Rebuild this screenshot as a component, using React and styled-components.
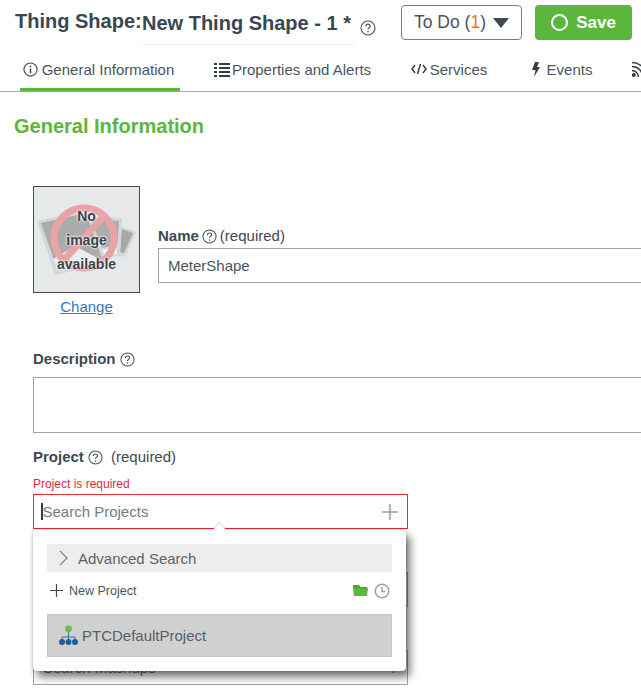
import React from 'react';
import styled, { createGlobalStyle } from 'styled-components';

const GlobalStyle = createGlobalStyle`
  html, body {
    margin: 0;
    padding: 0;
    height: 100%;
    overflow: hidden;
    background: #ffffff;
  }
  body {
    font-family: "Liberation Sans", Arial, sans-serif;
    color: #333d47;
  }
`;

const Page = styled.div`
  width: 641px;
  height: 689px;
  overflow: hidden;
`;

const Header = styled.div`
  height: 50px;
  display: flex;
  align-items: flex-start;
  padding: 4px 0 0 15px;
  box-sizing: border-box;
  white-space: nowrap;
`;

const TitleLabel = styled.div`
  font-size: 20px;
  font-weight: bold;
  line-height: 35px;
  color: #3b4650;
  width: 127px;
`;

const TitleName = styled.div`
  font-size: 20px;
  font-weight: bold;
  line-height: 35px;
  height: 41px;
  color: #3b4650;
  width: 213px;
  padding-top: 2px;
  box-sizing: border-box;
  border-bottom: 1px solid #eeeeee;
`;

const TitleHelp = styled.span`
  display: flex;
  margin: 16px 0 0 5px;
`;

const TodoButton = styled.div`
  width: 119px;
  height: 33px;
  margin-left: 25px;
  margin-top: 1px;
  border: 1px solid #777f85;
  border-radius: 4px;
  font-size: 17.5px;
  display: flex;
  justify-content: center;
  align-items: center;
  gap: 7px;
  color: #4a545c;
`;

const Count = styled.span`
  color: #e8790c;
`;

const SaveButton = styled.div`
  width: 97px;
  height: 35px;
  margin-left: 13px;
  margin-top: 1px;
  border-radius: 4px;
  background: #5bb73b;
  color: #ffffff;
  font-size: 17px;
  font-weight: bold;
  display: flex;
  align-items: center;
  justify-content: center;
  gap: 8px;
  flex: none;
`;

const SaveRing = styled.span`
  width: 13px;
  height: 13px;
  border: 2.5px solid #ffffff;
  border-radius: 50%;
`;

const Tabs = styled.div`
  height: 42px;
  box-sizing: border-box;
  border-bottom: 1px solid #a8a8a8;
  display: flex;
  padding-left: 20px;
  white-space: nowrap;
  overflow: hidden;
`;

const Tab = styled.div`
  display: flex;
  align-items: center;
  justify-content: center;
  gap: ${p => p.$gap || 3}px;
  height: 41px;
  width: ${p => p.$width}px;
  margin-left: ${p => p.$space || 0}px;
  padding-right: ${p => p.$pad || 0}px;
  box-sizing: border-box;
  font-size: 15px;
  color: #4b555d;
  flex: none;
  border-bottom: 3px solid ${p => (p.$active ? '#5bb73b' : 'transparent')};
`;

const Content = styled.div`
  padding: 22px 0 0 14px;
`;

const SectionTitle = styled.h2`
  margin: 0;
  font-size: 20px;
  line-height: 24px;
  font-weight: bold;
  color: #5bb73b;
`;

const Form = styled.div`
  padding: 48px 0 0 19px;
  width: 700px;
`;

const NameRow = styled.div`
  display: flex;
  gap: 18px;
`;

const ImageColumn = styled.div`
  width: 107px;
  display: flex;
  flex-direction: column;
  align-items: center;
`;

const ImageBox = styled.div`
  position: relative;
  width: 107px;
  height: 107px;
  box-sizing: border-box;
  border: 1px solid #414c52;
  background: #e6e8ea;
`;

const ImageArt = styled.svg`
  display: block;
`;

const ImageText = styled.div`
  position: absolute;
  left: 0;
  right: 0;
  top: 17px;
  text-align: center;
  font-size: 14px;
  font-weight: bold;
  line-height: 24px;
  color: #3a444c;
  text-shadow: 0 0 3px #ffffff, 0 0 2px #ffffff;
`;

const ChangeLink = styled.a`
  margin-top: 5px;
  font-size: 15px;
  line-height: 18px;
  color: #2f7ab8;
  text-decoration: underline;
`;

const NameColumn = styled.div`
  flex: 1;
  padding-top: 41px;
`;

const Label = styled.div`
  display: flex;
  align-items: center;
  gap: ${p => p.$gap || 3}px;
  font-size: 15px;
  line-height: 18px;
  color: #3f4950;
`;

const LabelName = styled.b`
  font-weight: bold;
`;

const TextBox = styled.div`
  margin-top: ${p => p.$top || 3}px;
  width: ${p => p.$width || 640}px;
  height: ${p => p.$height || 35}px;
  box-sizing: border-box;
  border: 1px solid ${p => p.$border || '#a3a3a3'};
  padding: 0 9px;
  display: flex;
  align-items: center;
  justify-content: space-between;
  font-size: 15px;
  color: ${p => p.$color || '#4b555d'};
`;

const Field = styled.div`
  margin-top: ${p => p.$top}px;
`;

const ErrorText = styled.div`
  margin-top: 11px;
  font-size: 12px;
  line-height: 14px;
  color: #e8273a;
`;

const Caret = styled.span`
  width: 1.5px;
  height: 17px;
  background: #333d47;
  margin-left: -2px;
`;

const SearchText = styled.span`
  flex: 1;
`;

const ProjectArea = styled.div`
  position: relative;
  width: 375px;
`;

const Popup = styled.div`
  position: absolute;
  left: 0;
  top: 36px;
  width: 373px;
  height: 141px;
  box-sizing: border-box;
  background: #ffffff;
  border-radius: 4px;
  padding: 14px 14px 0;
  box-shadow: 4px 6px 8px rgba(0, 0, 0, 0.55), 0 0 3px rgba(0, 0, 0, 0.25);
`;

const PopupArrow = styled.span`
  position: absolute;
  top: -5px;
  left: 182px;
  width: 9px;
  height: 9px;
  background: #ffffff;
  transform: rotate(45deg);
  box-shadow: -1px -1px 1px rgba(0, 0, 0, 0.12);
`;

const AdvancedRow = styled.div`
  position: relative;
  height: 28px;
  background: #ededed;
  display: flex;
  align-items: center;
  gap: 10px;
  padding-left: 12px;
  font-size: 15px;
  color: #5a6369;
`;

const ActionRow = styled.div`
  height: 42px;
  display: flex;
  align-items: center;
  padding: 0 2px 5px 3px;
  box-sizing: border-box;
  font-size: 12.5px;
  color: #4b555d;
`;

const NewLabel = styled.span`
  margin-left: 6px;
  flex: 1;
`;

const ActionIcons = styled.span`
  display: flex;
  align-items: center;
  gap: 6px;
`;

const ResultRow = styled.div`
  height: 43px;
  box-sizing: border-box;
  background: #d0d0d0;
  border: 1px solid #c6c6c6;
  display: flex;
  align-items: center;
  gap: 3px;
  padding-left: 11px;
  font-size: 15px;
  color: #565f65;
`;

const Help = ({ size = 15 }) => (
  <svg width={size} height={size} viewBox="0 0 16 16" fill="none">
    <circle cx="8" cy="8" r="7" stroke="#4a545c" strokeWidth="1.1" />
    <path d="M5.8 6.3c0-1.3 1-2.1 2.2-2.1s2.2.8 2.2 2c0 1.7-2.2 1.7-2.2 3.4" stroke="#4a545c" strokeWidth="1.2" />
    <circle cx="8" cy="11.6" r=".8" fill="#4a545c" />
  </svg>
);

const Plus = ({ size, color, width = 1.5 }) => (
  <svg width={size} height={size} viewBox="0 0 16 16">
    <path d="M8 0v16M0 8h16" stroke={color} strokeWidth={width} fill="none" />
  </svg>
);

const NoImageArt = () => (
  <ImageArt width="105" height="105" viewBox="0 0 105 105">
    <path d="M86 39l16 6-11 25-7-2z" fill="#d4d6d7" />
    <path d="M88 42l11 4-9 20-4-1z" fill="#a8a8a8" />
    <path d="M54 29l34 2-2 38-22 2z" fill="#d4d6d7" />
    <path d="M58 32l27 2-2 25-19 2z" fill="#adadad" />
    <path d="M64 63l19-2v6l-17 2z" fill="#f2f3f3" />
    <path d="M3 34l51-11 19 53-52 12z" fill="#d4d6d7" />
    <path d="M7 36l45-10 17 48-45 10z" fill="#ababab" />
    <path d="M19 72l22-13 28 15-45 10z" fill="#eceded" />
    <circle cx="50" cy="51" r="30" fill="none" stroke="#e9a3a7" strokeWidth="7" />
    <path d="M71 28L29 74" stroke="#e9a3a7" strokeWidth="7" />
  </ImageArt>
);

const App = () => (
  <Page>
    <GlobalStyle />
    <Header>
      <TitleLabel>Thing Shape:</TitleLabel>
      <TitleName>New Thing Shape - 1 *</TitleName>
      <TitleHelp><Help size={16} /></TitleHelp>
      <TodoButton>
        <span>To Do (<Count>1</Count>)</span>
        <svg width="16" height="10" viewBox="0 0 16 10"><path d="M0 0h16L8 10z" fill="#3f4950" /></svg>
      </TodoButton>
      <SaveButton><SaveRing />Save</SaveButton>
    </Header>
    <Tabs>
      <Tab $active $width={160} $pad={3} $gap={4}>
        <svg width="15" height="15" viewBox="0 0 16 16" fill="none">
          <circle cx="8" cy="8" r="7" stroke="#3f4950" strokeWidth="1.2" />
          <path d="M8 7v5M8 4v1.6" stroke="#3f4950" strokeWidth="1.6" />
        </svg>
        General Information
      </Tab>
      <Tab $width={159} $space={33} $gap={2}>
        <svg width="16" height="15" viewBox="0 0 16 15">
          <path d="M0 1h3v2H0zM5 1h11v2H5zM0 5h3v2H0zM5 5h11v2H5zM0 9h3v2H0zM5 9h11v2H5zM0 13h3v2H0zM5 13h11v2H5z" fill="#333d47" />
        </svg>
        Properties and Alerts
      </Tab>
      <Tab $width={80} $space={37}>
        <svg width="16" height="12" viewBox="0 0 16 12" fill="none">
          <path d="M4 2L1 6l3 4M12 2l3 4-3 4M9.500 1l-3 10" stroke="#333d47" strokeWidth="1.5" />
        </svg>
        Services
      </Tab>
      <Tab $width={66} $space={40} $gap={7}>
        <svg width="8" height="15" viewBox="0 0 8 15"><path d="M3 0h4L5 5h3L2 15l1.500-7H0z" fill="#333d47" /></svg>
        Events
      </Tab>
      <Tab $width={16} $space={37}>
        <svg width="16" height="16" viewBox="0 0 16 16" fill="none" style={{ flex: 'none' }}>
          <path d="M0 1.500c8 0 14.500 6.500 14.500 14.500M0 5.500c6 0 10.500 4.500 10.500 10.500M0 9.500c3.500 0 6.500 3 6.500 6.500" stroke="#333d47" strokeWidth="1.400" />
          <circle cx="1.800" cy="14" r="2" fill="#333d47" />
        </svg>
      </Tab>
    </Tabs>
    <Content>
      <SectionTitle>General Information</SectionTitle>
      <Form>
        <NameRow>
          <ImageColumn>
            <ImageBox>
              <NoImageArt />
              <ImageText>No<br />image<br />available</ImageText>
            </ImageBox>
            <ChangeLink>Change</ChangeLink>
          </ImageColumn>
          <NameColumn>
            <Label><LabelName>Name</LabelName><Help /><span>(required)</span></Label>
            <TextBox $width={500}>MeterShape</TextBox>
          </NameColumn>
        </NameRow>
        <Field $top={34}>
          <Label $gap={4}><LabelName>Description</LabelName><Help /></Label>
          <TextBox $top={9} $height={56} />
        </Field>
        <Field $top={15}>
          <Label $gap={4}><LabelName>Project</LabelName><Help /><span>&nbsp;(required)</span></Label>
          <ErrorText>Project is required</ErrorText>
          <ProjectArea>
            <TextBox $top={3} $width={375} $border="#e8273a" $color="#737c82">
              <Caret />
              <SearchText>Search Projects</SearchText>
              <Plus size={16} color="#9a9a9a" />
            </TextBox>
            <Popup>
              <PopupArrow />
              <AdvancedRow>
                <svg width="9" height="16" viewBox="0 0 9 16" fill="none"><path d="M1 1l7 7-7 7" stroke="#777f85" strokeWidth="1.1" /></svg>
                Advanced Search
              </AdvancedRow>
              <ActionRow>
                <Plus size={13} color="#3f4950" />
                <NewLabel>New Project</NewLabel>
                <ActionIcons>
                  <svg width="15" height="11" viewBox="0 0 15 11"><path d="M0 0h6l1.500 2H14v1H0z" fill="#4fa52f" /><path d="M0 3h15l-1 8H1z" fill="#5bb73b" /></svg>
                  <svg width="16" height="16" viewBox="0 0 16 16" fill="none">
                    <circle cx="8" cy="8" r="6.800" stroke="#a0a0a0" strokeWidth="1.500" />
                    <path d="M8 4v4.500h3.500" stroke="#a0a0a0" strokeWidth="1.500" />
                  </svg>
                </ActionIcons>
              </ActionRow>
              <ResultRow>
                <svg width="20" height="21" viewBox="0 0 20 21" fill="none">
                  <path d="M9.500 6v6M3 16v-4h13v4M9.500 12v4" stroke="#4a6b8a" strokeWidth="1" />
                  <circle cx="9.500" cy="4" r="3.400" fill="#6cc04a" />
                  <circle cx="3" cy="17" r="3" fill="#1f5f99" />
                  <circle cx="9.500" cy="17" r="3" fill="#1f5f99" />
                  <circle cx="16" cy="17" r="3" fill="#1f5f99" />
                </svg>
                PTCDefaultProject
              </ResultRow>
            </Popup>
          </ProjectArea>
        </Field>
        <TextBox $top={43} $width={375} />
        <TextBox $top={43} $width={375} $color="#6c757b">
          Search Mashups
          <Plus size={10} color="#555555" />
        </TextBox>
      </Form>
    </Content>
  </Page>
);

export default App;
